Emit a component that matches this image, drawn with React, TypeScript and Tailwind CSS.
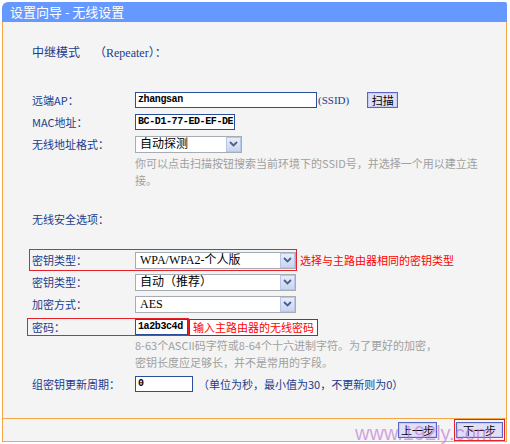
import React from "react";

const CJK = "font-['Noto_Sans_CJK_SC',sans-serif]";
const SERIF = "font-['Liberation_Serif','Noto_Sans_CJK_SC',serif]";
const MONO = "font-['Liberation_Mono','Noto_Sans_CJK_SC',monospace]";

function Label({ children, className = "" }: { children: React.ReactNode; className?: string }) {
  return <span className={`w-[103px] shrink-0 whitespace-nowrap text-[#1a3c8c] ${className}`}>{children}</span>;
}

function Select({ value, w }: { value: string; w: string }) {
  return (
    <div className={`${w} h-[17px] flex border border-[#a5acb2] bg-white`}>
      <span className={`flex-1 pl-[4px] leading-[15px] text-[12px] text-black whitespace-nowrap ${SERIF}`}>{value}</span>
      <span className="w-[15px] h-full flex items-center justify-center border border-[#b7c6ea] bg-[linear-gradient(#e6edfb,#c7d5f2)]">
        <svg width="9" height="6" viewBox="0 0 9 6">
          <path d="M1 1 L4.5 4.5 L8 1" stroke="#4d6185" strokeWidth="1.8" fill="none" />
        </svg>
      </span>
    </div>
  );
}

function Input({ value, w }: { value: string; w: string }) {
  return (
    <div
      className={`${w} h-[16px] shrink-0 overflow-hidden whitespace-nowrap border border-[#2a4d9c] bg-white pl-[2px] leading-[14px] text-[10px] tracking-[-0.4px] font-bold text-black ${MONO}`}
    >
      {value}
    </div>
  );
}

function Btn({ children, w }: { children: React.ReactNode; w: string }) {
  return (
    <span
      className={`${w} h-[16px] flex items-center justify-center whitespace-nowrap border border-[#5666c8] bg-[#dfe0f8] text-[11px] leading-none text-black shadow-[inset_0_0_0_1px_#c9cdf4]`}
    >
      {children}
    </span>
  );
}

export default function App() {
  return (
    <div className={`relative w-[510px] h-[444px] bg-white pt-[2px] pl-[2px] ${CJK} text-[11px]`}>
      <div className="w-[505px]">
        {/* title bar */}
        <div className="h-[20px] bg-[#6699ff] rounded-tl-[6px] rounded-tr-[2px] pl-[8px] flex items-center text-white text-[13px]">
          设置向导 - 无线设置
        </div>

        <div className="h-[420px] flex flex-col border-x border-b border-[#f5a649] bg-[#f4f4f4]">
          <div className="flex-1 pl-[29px] pt-[21px]">
            <div className="h-[18px] flex items-center text-[#1a3c8c] text-[12px]">
              <span className="w-[62px]">中继模式</span>
              <span>（<span className={SERIF}>Repeater</span>）：</span>
            </div>

            <div className="mt-[28px] h-[22px] flex items-center">
              <Label>远端AP：</Label>
              <Input value="zhangsan" w="w-[182px]" />
              <span className={`ml-[1px] text-[#1a3c8c] text-[11px] ${SERIF}`}>(SSID)</span>
              <span className="ml-[18px]">
                <Btn w="w-[31px]">扫描</Btn>
              </span>
            </div>

            <div className="h-[22px] flex items-center">
              <Label>MAC地址：</Label>
              <Input value="BC-D1-77-ED-EF-DE" w="w-[100px]" />
            </div>

            <div className="h-[22px] flex items-center">
              <Label>无线地址格式：</Label>
              <Select value="自动探测" w="w-[107px]" />
            </div>

            <div className="pl-[103px] text-[#a0a0a0] leading-[17px] whitespace-nowrap">
              你可以点击扫描按钮搜索当前环境下的SSID号，并选择一个用以建立连
              <br />
              接。
            </div>

            <div className="mt-[19px] h-[22px] flex items-center">
              <Label>无线安全选项：</Label>
            </div>

            <div className="mt-[19px] flex items-center">
              <div className="ml-[-3px] h-[22px] pl-[2px] flex items-center border border-[#e8202a]">
                <Label>密钥类型：</Label>
                <Select value="WPA/WPA2-个人版" w="w-[161px]" />
              </div>
              <span className="ml-[3px] text-[#ff0000]">选择与主路由器相同的密钥类型</span>
            </div>

            <div className="h-[22px] flex items-center">
              <Label>密钥类型：</Label>
              <Select value="自动（推荐）" w="w-[161px]" />
            </div>

            <div className="h-[22px] flex items-center">
              <Label>加密方式：</Label>
              <Select value="AES" w="w-[161px]" />
            </div>

            <div className="mt-[3px] flex items-center">
              <div className="ml-[-5px] h-[18px] pl-[4px] flex items-center border border-[#e8202a]">
                <Label>密码：</Label>
                <Input value="1a2b3c4d" w="w-[53px]" />
              </div>
              <span className="h-[17px] px-[3px] flex items-center border border-[#2a4d9c] text-[#ff0000] bg-white">
                输入主路由器的无线密码
              </span>
            </div>

            <div className="mt-[1px] pl-[103px] text-[#a0a0a0] leading-[17px] whitespace-nowrap">
              8-63个ASCII码字符或8-64个十六进制字符。为了更好的加密，
              <br />
              密钥长度应足够长，并不是常用的字段。
            </div>

            <div className="mt-[2px] h-[22px] flex items-center">
              <Label>组密钥更新周期：</Label>
              <Input value="0" w="w-[58px]" />
              <span className="ml-[5px] text-[#1a3c8c] whitespace-nowrap">（单位为秒，最小值为30，不更新则为0）</span>
            </div>
          </div>

          {/* footer */}
          <div className="h-[23px] border-t border-[#f5a649] flex items-center justify-end pr-[1px]">
            <Btn w="w-[39px]">上一步</Btn>
            <span className="ml-[17px] h-[22px] w-[51px] flex items-center justify-center border border-[#e8202a]">
              <Btn w="w-[47px]">下一步</Btn>
            </span>
          </div>
        </div>
      </div>

      <span className="pointer-events-none absolute left-[355px] top-[418px] font-['Liberation_Sans',sans-serif] text-[20px] text-[#b86ad0]/60">
        www.192ly.com
      </span>
    </div>
  );
}
